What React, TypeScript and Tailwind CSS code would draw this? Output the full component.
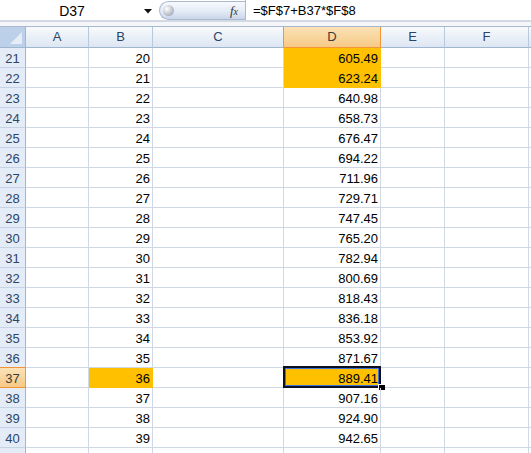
const cols = ["A", "B", "C", "D", "E", "F"];
const widths = ["w-[63px]", "w-[64px]", "w-[131px]", "w-[97px]", "w-[64px]", "w-[84px]"];
const dVals = [
  "605.49", "623.24", "640.98", "658.73", "676.47", "694.22", "711.96", "729.71", "747.45", "765.20",
  "782.94", "800.69", "818.43", "836.18", "853.92", "871.67", "889.41", "907.16", "924.90", "942.65",
];

function FormulaBar() {
  return (
    <div className="flex h-[20px] bg-white">
      <div className="flex w-[159px] items-center">
        <div className="flex h-full w-[144px] items-center justify-center pt-[2px] text-[14px] text-black">D37</div>
        <svg width="8" height="5" viewBox="0 0 8 5" className="mt-[3px]">
          <polygon points="0,0 8,0 4,4.5" fill="#111" />
        </svg>
      </div>
      <div className="mt-[1px] flex h-[19px] w-[86px] items-center justify-between rounded-l-full border border-r-0 border-[#a9b9cf] bg-gradient-to-b from-[#f7f9fc] via-[#e6edf7] to-[#c9d6ea] pl-[3px] pr-[7px]">
        <div className="h-[11px] w-[11px] rounded-full bg-[radial-gradient(circle_at_35%_35%,#ffffff,#b9bfc8_60%,#8e96a2)]" />
        <span className="font-['Liberation_Serif'] text-[13px] italic text-[#333]">
          f<span className="text-[10px]">x</span>
        </span>
      </div>
      <div className="flex flex-1 items-center border-l border-[#a9b9cf] pl-[7px] pt-[2px] text-[13px] text-black">
        =$F$7+B37*$F$8
      </div>
    </div>
  );
}

function HeaderRow() {
  return (
    <div className="flex h-[21px]">
      <div className="relative w-[26px] border-r border-b border-[#9eb6ce] bg-[#bcd0ea]">
        <svg width="12" height="12" viewBox="0 0 12 12" className="absolute right-[3px] bottom-[3px]">
          <polygon points="12,0 12,12 0,12" fill="#e6edf7" />
        </svg>
      </div>
      {cols.map((c, i) => {
        const sel = c === "D";
        const before = c === "C";
        return (
          <div
            key={c}
            className={
              "flex items-center justify-center border-r border-b text-[13px] " +
              widths[i] +
              (sel
                ? " border-[#f29536] bg-gradient-to-b from-[#fbe2b7] to-[#f6c985] text-[#3b3b3b]"
                : before
                ? " border-r-[#f29536] border-b-[#9eb6ce] bg-gradient-to-b from-[#f8fafd] to-[#dde6f2] text-[#2c4466]"
                : " border-[#b9c9dd] border-b-[#9eb6ce] bg-gradient-to-b from-[#f8fafd] to-[#dde6f2] text-[#2c4466]")
            }
          >
            {c}
          </div>
        );
      })}
      <div className="flex-1 border-b border-[#9eb6ce] bg-gradient-to-b from-[#f8fafd] to-[#dde6f2]" />
    </div>
  );
}

function Row({ n }: { n: number }) {
  const idx = n - 21;
  const visible = n <= 40;
  const b = visible ? String(n - 1) : "";
  const d = visible ? dVals[idx] : "";
  const rowSel = n === 37;
  const bFill = n === 37;
  const dFill = n === 21 || n === 22 || n === 37;
  const cell = "flex h-[20px] items-end justify-end border-r border-b pr-[2px] pb-[1px] leading-[15px]";
  return (
    <div className="flex h-[20px]">
      <div
        className={
          "flex h-[20px] w-[26px] items-end justify-center border-r pb-[1px] leading-[15px] " +
          (rowSel
            ? "border-b border-[#f29536] bg-gradient-to-b from-[#fbe2b7] to-[#f6c985] text-[#3b3b3b]"
            : n === 36
            ? "border-b border-r-[#9eb6ce] border-b-[#f29536] bg-[#e4ecf7] text-[#2c4466]"
            : "border-b border-r-[#9eb6ce] border-b-[#c5d3e4] bg-[#e4ecf7] text-[#2c4466]")
        }
      >
        {visible ? n : ""}
      </div>
      <div className={cell + " w-[63px] border-[#d0d7e5]"} />
      <div className={cell + " w-[64px] " + (bFill ? "border-[#ffc000] bg-[#ffc000]" : "border-[#d0d7e5]")}>{b}</div>
      <div className={cell + " w-[131px] border-[#d0d7e5]"} />
      <div className={cell + " relative w-[97px] " + (dFill ? "border-[#ffc000] bg-[#ffc000]" : "border-[#d0d7e5]")}>
        {d}
        {n === 37 && (
          <>
            <div className="absolute -left-[1px] -top-[2px] -right-[1px] -bottom-[1px] border-2 border-[#0b1020] shadow-[inset_0_0_0_1px_#3f72d6]" />
            <div className="absolute left-[94px] top-[16px] h-[6px] w-[7px] border-l border-t border-white bg-black" />
          </>
        )}
      </div>
      <div className={cell + " w-[64px] border-[#d0d7e5]"} />
      <div className={cell + " w-[84px] border-[#d0d7e5]"} />
      <div className="h-[20px] flex-1 border-b border-[#d0d7e5]" />
    </div>
  );
}

export default function App() {
  const rows = Array.from({ length: 21 }, (_, i) => 21 + i);
  return (
    <div className="h-screen w-full overflow-hidden bg-white font-['Liberation_Sans'] text-[13px] text-black">
      <FormulaBar />
      <div className="h-[2px] bg-[#d3d9e2]" />
      <div className="h-[4px] bg-[#f4f6f9]" />
      <div className="h-[1px] bg-[#a9b8cc]" />
      <HeaderRow />
      {rows.map((n) => (
        <Row key={n} n={n} />
      ))}
    </div>
  );
}
